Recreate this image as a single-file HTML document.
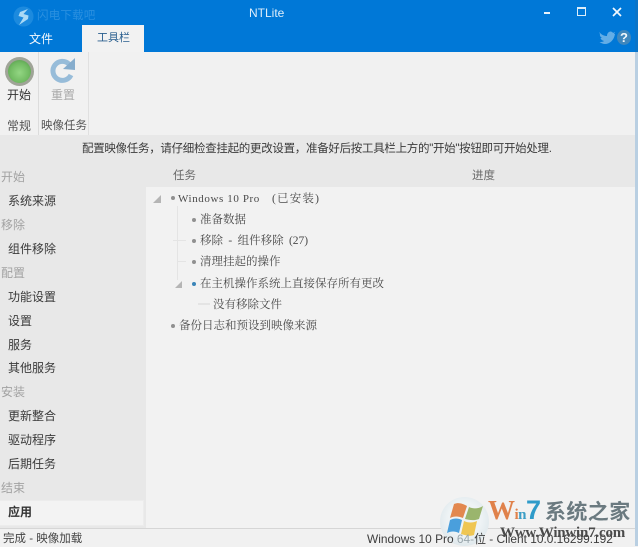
<!DOCTYPE html>
<html><head><meta charset="utf-8">
<style>
html,body{margin:0;padding:0}
body{width:638px;height:546px;position:relative;overflow:hidden;background:#f1f1f1;font-family:"Liberation Sans","Noto Sans CJK SC",sans-serif;color:#333}
div,span,svg{position:absolute}
.t{white-space:nowrap;font-size:12px;line-height:16px}
.g{color:#a2a2a2}
.s{color:#3a3a3a;left:8px}
.m{font-family:"Liberation Serif","Noto Serif CJK SC",serif;color:#4a4a4a;font-size:11.5px}
.d{width:4px;height:4px;border-radius:50%;background:#909090}
i{font-style:normal}
</style></head><body>
<div style="left:0;top:0;width:638px;height:52px;background:#0078d7"></div>
<svg style="left:13px;top:6px" width="21" height="21" viewBox="0 0 21 21"><circle cx="10.500" cy="10.500" r="10" fill="#1c8ade"/><path d="M15 3 L7 6 L5.500 10 L10.500 11.500 L6 19 L15 13 L15.500 9.500 L10.500 8 Z" fill="#a9d9f5"/></svg>
<div class="t" style="left:37px;top:8px;font-size:11.500px;color:#2a90e0;letter-spacing:.2px">闪电下载吧</div>
<div class="t" style="left:249px;top:5px;width:50px;color:#dfeefa;font-size:12px">NTLite</div>
<div style="left:544px;top:12px;width:6px;height:2px;background:#e8f2fb"></div>
<div style="left:577px;top:7px;width:7px;height:6px;border:1.5px solid #dcedf9;border-top-width:2.500px"></div>
<svg style="left:612px;top:7px" width="10" height="10" viewBox="0 0 10 10"><path d="M1 1 L9 9 M9 1 L1 9" stroke="#f2f8fd" stroke-width="1.700"/></svg>
<svg style="left:599px;top:30px" width="16" height="14" viewBox="0 0 16 14"><path d="M0 2 C3 5 5 6 8 6 C8 2 12 0 14 3 L16 2 L15 4 L16 4 C15 10 11 14 6 14 C4 14 2 13 0.500 12 C2 12 4 12 5 11 C3 10.500 2 9.500 1.500 8 L3 8 C1.500 7 0.500 5.500 1 4 Z" fill="#63ade6"/></svg>
<div style="left:617px;top:30px;width:14px;height:15px;border-radius:50%;background:#3f87bd"></div>
<div class="t" style="left:620px;top:30px;color:#f2f7fb;font-size:13px;font-weight:bold">?</div>

<div class="t" style="left:29px;top:31px;color:#f3f8fd">文件</div>
<div style="left:82px;top:25px;width:62px;height:27px;background:#f2f2f2"></div>
<div class="t" style="left:97px;top:30px;color:#2a5f8f;font-size:11px">工具栏</div>

<div style="left:0;top:52px;width:635px;height:83px;background:#f1f1f1"></div>
<div style="left:38px;top:52px;width:1px;height:83px;background:#dcdcdc"></div>
<div style="left:88px;top:52px;width:1px;height:83px;background:#e0e0e0"></div>
<div style="left:5px;top:57px;width:29px;height:29px;border-radius:50%;background:radial-gradient(circle,#a0a498 70%,#8f938b 82%,#d9d9d9 100%)"></div>
<div style="left:8px;top:60px;width:23px;height:23px;border-radius:50%;background:radial-gradient(circle at 50% 55%,#93d683 0%,#72bb63 55%,#4f9148 100%)"></div>
<svg style="left:49px;top:57px" width="28" height="27" viewBox="0 0 28 27"><path d="M22 18 A9.500 9.500 0 1 1 20 7" fill="none" stroke="#97bcd9" stroke-width="5"/><path d="M26 1 L26 13 L14 12 Z" fill="#86adcd"/></svg>
<div class="t" style="left:7px;top:87px">开始</div>
<div class="t" style="left:51px;top:87px;color:#a9a9a9">重置</div>
<div class="t" style="left:7px;top:118px;color:#555">常规</div>
<div class="t" style="left:41px;top:118px;color:#555;font-size:11.500px">映像任务</div>

<div style="left:0;top:135px;width:635px;height:31px;background:#e8e8e8"></div>
<div class="t" style="left:82px;top:141px;color:#3a3a3a;font-size:11.500px;letter-spacing:-.3px">配置映像任务，请仔细检查挂起的更改设置，准备好后按工具栏上方的"开始"按钮即可开始处理.</div>

<div style="left:0;top:166px;width:146px;height:362px;background:#e8e8e8"></div>
<div style="left:146px;top:166px;width:489px;height:21px;background:#e8e8e8"></div>
<div style="left:146px;top:187px;width:489px;height:341px;background:#f2f2f2"></div>
<div style="left:635px;top:0;width:3px;height:546px;background:#b9cfe2"></div>
<div style="left:635px;top:0;width:3px;height:52px;background:#0a74c8"></div>

<div class="t g" style="left:1px;top:169px">开始</div>
<div class="t s" style="top:193px">系统来源</div>
<div class="t g" style="left:1px;top:217px">移除</div>
<div class="t s" style="top:241px">组件移除</div>
<div class="t g" style="left:1px;top:265px">配置</div>
<div class="t s" style="top:289px">功能设置</div>
<div class="t s" style="top:313px">设置</div>
<div class="t s" style="top:337px">服务</div>
<div class="t s" style="top:360px">其他服务</div>
<div class="t g" style="left:1px;top:384px">安装</div>
<div class="t s" style="top:408px">更新整合</div>
<div class="t s" style="top:432px">驱动程序</div>
<div class="t s" style="top:456px">后期任务</div>
<div class="t g" style="left:1px;top:480px">结束</div>
<div style="left:0;top:500px;width:143px;height:24px;background:#f3f3f3;border:1px solid #ececec;border-left:0"></div>
<div class="t" style="left:8px;top:504px;font-weight:bold;color:#333">应用</div>

<div class="t" style="left:173px;top:168px;color:#6a6a6a;font-size:11.500px">任务</div>
<div class="t" style="left:472px;top:168px;color:#6a6a6a;font-size:11.500px">进度</div>

<svg style="left:150px;top:190px" width="120" height="130" viewBox="0 0 120 130">
<path d="M3 13 L11 13 L11 5 Z" fill="#b5b5b5"/>
<path d="M27.500 16 V90 M23 50.500 H36 M27.500 71.500 H36" stroke="#e4e4e4" fill="none"/>
<path d="M25 98 L32 98 L32 91 Z" fill="#b5b5b5"/>
<path d="M48 114 H60" stroke="#d5d5d5"/>
</svg>
<div class="d" style="left:171px;top:196px"></div>
<div class="t m" style="left:178px;top:191px;font-size:11px;letter-spacing:.6px">Windows 10 Pro</div>
<div class="t m" style="left:272px;top:191px;letter-spacing:1.200px">(已安装)</div>
<div class="d" style="left:192px;top:218px"></div>
<div class="t m" style="left:200px;top:212px">准备数据</div>
<div class="d" style="left:192px;top:239px"></div>
<div class="t m" style="left:200px;top:233px;word-spacing:2.500px">移除 - 组件移除 (27)</div>
<div class="d" style="left:192px;top:260px"></div>
<div class="t m" style="left:200px;top:254px">清理挂起的操作</div>
<div class="d" style="left:192px;top:282px;background:#3a85b8"></div>
<div class="t m" style="left:200px;top:276px">在主机操作系统上直接保存所有更改</div>
<div class="t m" style="left:213px;top:297px">没有移除文件</div>
<div class="d" style="left:171px;top:324px"></div>
<div class="t m" style="left:179px;top:318px">备份日志和预设到映像来源</div>

<div style="left:0;top:528px;width:635px;height:18px;background:#f1f1f1;border-top:1px solid #d6d6d6;box-sizing:border-box"></div>
<div class="t" style="left:3px;top:531px;color:#444;font-size:11.500px">完成 - 映像加载</div>

<div style="left:440px;top:497px;width:49px;height:49px;border-radius:50%;background:radial-gradient(circle at 50% 45%,#eef3f5 45%,#dfe8ec 75%,#c2ced6 100%)"></div>
<svg style="left:446px;top:502px" width="40" height="36" viewBox="0 0 40 36">
<path d="M8 2 C13 0 17 2 21 4 L17 16 C12 14 8 14 4 16 Z" fill="#e2884f"/>
<path d="M23 5 C27 7 32 7 37 4 L33 17 C28 19 23 18 19 17 Z" fill="#9ab56d"/>
<path d="M4 18 C8 16 12 16 16 18 L13 31 C9 29 5 29 1 31 Z" fill="#4a9fdc"/>
<path d="M18 19 C22 21 27 21 31 19 L28 33 C23 35 19 33 15 32 Z" fill="#efc653"/>
</svg>
<div class="t" style="left:488px;top:497px;font:bold 27px/26px 'Liberation Serif',serif;color:#e0814a;letter-spacing:-.5px">W<i style="font-size:15px;color:#e0814a">i</i><i style="font-size:15px;color:#3c9ec6">n</i><i style="color:#2f9bc9;font-family:'Liberation Sans'">7</i></div>
<div class="t" style="left:545px;top:499px;font:bold 21px/24px 'Noto Sans CJK SC',sans-serif;color:#6b7a80;letter-spacing:.4px">系统之家</div>
<div class="t" style="left:367px;top:531px;font-size:11.900px;color:#3d3d3d">Windows 10 Pro <i style="color:#9aa7ad">64-</i>位 - Client 10.0.16299.192</div>
<div class="t" style="left:500px;top:525px;font:bold 15px/16px 'Liberation Serif',serif;color:#4a4a4a;letter-spacing:-.2px">Www.Winwin7.com</div>
</body></html>
